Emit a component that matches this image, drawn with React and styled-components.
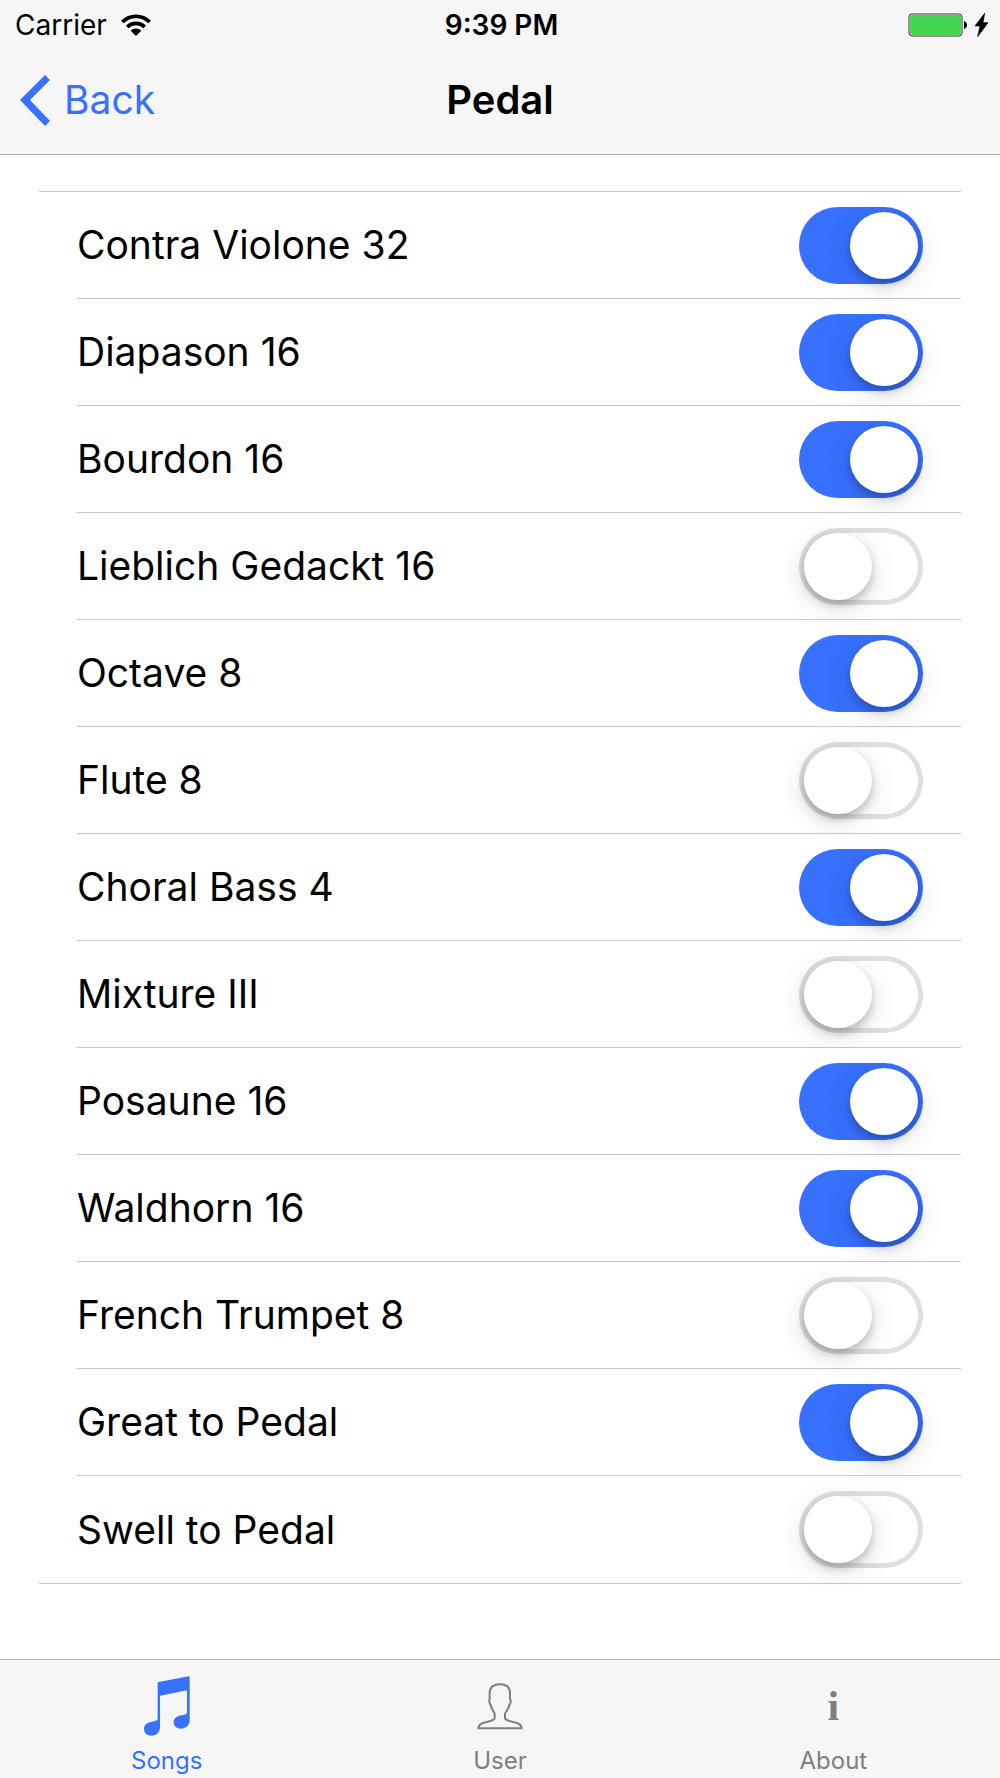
import React, { useState } from 'react';
import styled, { createGlobalStyle } from 'styled-components';

const GlobalStyle = createGlobalStyle`
  * {
    box-sizing: border-box;
  }
  body {
    margin: 0;
    background: #fff;
    color: #000;
    font-family: Inter, 'Liberation Sans', sans-serif;
  }
`;

const Screen = styled.div`
  display: flex;
  flex-direction: column;
  min-height: 100vh;
`;

const Header = styled.header`
  background: #f6f6f6;
  border-bottom: 1px solid #b2b2b2;
`;

const StatusBar = styled.div`
  display: grid;
  grid-template-columns: 1fr auto 1fr;
  align-items: center;
  height: 50px;
  padding: 0 12px 0 15px;
  font-size: 28px;
  line-height: 34px;
`;

const StatusGroup = styled.div`
  display: flex;
  align-items: center;
  justify-content: ${({ $end }) => ($end ? 'flex-end' : 'flex-start')};
  gap: ${({ $end }) => ($end ? '7px' : '14px')};
`;

const Clock = styled.time`
  font-weight: 600;
`;

const NavBar = styled.nav`
  display: grid;
  grid-template-columns: 1fr auto 1fr;
  align-items: center;
  height: 104px;
  padding: 0 20px 4px;
`;

const BackButton = styled.button`
  display: flex;
  align-items: center;
  justify-self: start;
  gap: 14px;
  padding: 0;
  border: 0;
  background: none;
  color: #3870ff;
  font: inherit;
  font-size: 39px;
  line-height: 48px;
  cursor: pointer;
`;

const Title = styled.h1`
  margin: 0;
  font-size: 40px;
  line-height: 48px;
  font-weight: 600;
`;

const Content = styled.main`
  flex: 1;
  padding: 36px 39px;
`;

const StopList = styled.ul`
  margin: 0;
  padding: 0 0 0 38px;
  list-style: none;
  border-top: 1px solid #c8c8c8;
  border-bottom: 1px solid #c8c8c8;
`;

const StopRow = styled.li`
  display: flex;
  align-items: center;
  justify-content: space-between;
  height: 107px;
  padding-right: 38px;

  &:not(:last-child) {
    border-bottom: 1px solid #c8c8c8;
  }
`;

const StopName = styled.label`
  font-size: 39px;
  line-height: 48px;
`;

const Toggle = styled.input`
  appearance: none;
  flex: none;
  width: 124px;
  height: 77px;
  margin: 0;
  padding: 5px;
  border-radius: 39px;
  background: #fff;
  box-shadow: inset 0 0 0 5px #dfdfdf;
  cursor: pointer;

  &::before {
    content: '';
    display: block;
    width: 68px;
    height: 67px;
    border-radius: 50%;
    background: #fff;
    box-shadow: 0 7px 28px rgba(0, 0, 0, 0.14), 0 5px 8px rgba(0, 0, 0, 0.2);
  }

  &:checked {
    background: #3870ff;
    box-shadow: none;
  }

  &:checked::before {
    margin-left: auto;
  }
`;

const TabBar = styled.nav`
  display: grid;
  grid-template-columns: repeat(3, 1fr);
  background: #f6f6f6;
  border-top: 1px solid #b2b2b2;
`;

const Tab = styled.a`
  display: flex;
  flex-direction: column;
  align-items: center;
  gap: 11px;
  padding: 16px 0 3px;
  color: ${({ $active }) => ($active ? '#3870ff' : '#7f7f7f')};
  font-size: 24px;
  line-height: 28px;
  text-decoration: none;
`;

const TabIcon = styled.span`
  display: flex;
  align-items: center;
  justify-content: center;
  height: 60px;
`;

const InfoGlyph = styled.span`
  font-family: 'Liberation Serif', serif;
  font-size: 42px;
  line-height: 48px;
  font-weight: 700;
`;

const WifiIcon = () => (
  <svg width="30" height="22" viewBox="0 0 90 66" aria-hidden="true">
    <g fill="none" stroke="#000" strokeWidth="11">
      <path d="M4 24A58 58 0 0 1 86 24" />
      <path d="M19 39A37 37 0 0 1 71 39" />
    </g>
    <path d="M29 50A23 23 0 0 1 61 50L45 66Z" />
  </svg>
);

const BatteryIcon = () => (
  <svg width="60" height="24" viewBox="0 0 60 24" aria-hidden="true">
    <rect x="1" y="1" width="53" height="22" rx="3" fill="#fff" stroke="#333" />
    <rect x="2" y="2" width="51" height="20" rx="2" fill="#44d553" />
    <path d="M56 8Q59 9 59 12T56 16Z" />
  </svg>
);

const BoltIcon = () => (
  <svg width="13" height="24" viewBox="0 0 39 72" aria-hidden="true">
    <path d="M29 1L0 39H15L8 71L39 29H24Z" stroke="#000" strokeWidth="2" />
  </svg>
);

const ChevronIcon = () => (
  <svg width="30" height="51" viewBox="0 0 30 51" fill="currentColor" aria-hidden="true">
    <path d="M25 0L30 5L10 25L30 46L25 51L0 25Z" />
  </svg>
);

const MusicIcon = () => (
  <svg width="46" height="60" viewBox="0 0 138 180" fill="currentColor" aria-hidden="true">
    <path d="M41 21Q41 18 44 18L134 1Q137 1 137 4V133C137 148 126 158 110 158C97 158 89 150 89 139C89 127 99 120 113 118C124 116 129 114 129 107V43L48 59V153C48 168 38 179 22 179C8 179 0 170 0 159C0 146 10 139 25 137C36 135 41 134 41 127Z" />
  </svg>
);

const UserIcon = () => (
  <svg width="46" height="47" viewBox="0 0 138 141" fill="none" stroke="currentColor" strokeWidth="6" aria-hidden="true">
    <path d="M69 4C48 4 38 14 38 31V49C35 50 37 62 41 66C43 78 49 82 53 92V106C49 120 5 112 4 136H134C133 112 89 120 84 106V92C89 82 95 78 97 66C101 62 103 50 99 49V31C99 14 90 4 69 4Z" />
  </svg>
);

const tabs = [
  { name: 'Songs', icon: <MusicIcon /> },
  { name: 'User', icon: <UserIcon /> },
  { name: 'About', icon: <InfoGlyph aria-hidden="true">i</InfoGlyph> },
];

const initialStops = [
  { name: 'Contra Violone 32', on: true },
  { name: 'Diapason 16', on: true },
  { name: 'Bourdon 16', on: true },
  { name: 'Lieblich Gedackt 16', on: false },
  { name: 'Octave 8', on: true },
  { name: 'Flute 8', on: false },
  { name: 'Choral Bass 4', on: true },
  { name: 'Mixture III', on: false },
  { name: 'Posaune 16', on: true },
  { name: 'Waldhorn 16', on: true },
  { name: 'French Trumpet 8', on: false },
  { name: 'Great to Pedal', on: true },
  { name: 'Swell to Pedal', on: false },
];

const App = () => {
  const [stops, setStops] = useState(initialStops);

  const toggleStop = (index) => {
    setStops(stops.map((stop, i) => (i === index ? { ...stop, on: !stop.on } : stop)));
  };

  return (
    <Screen>
      <GlobalStyle />
      <Header>
        <StatusBar>
          <StatusGroup>
            <span>Carrier</span>
            <WifiIcon />
          </StatusGroup>
          <Clock>9:39 PM</Clock>
          <StatusGroup $end>
            <BatteryIcon />
            <BoltIcon />
          </StatusGroup>
        </StatusBar>
        <NavBar>
          <BackButton type="button">
            <ChevronIcon />
            <span>Back</span>
          </BackButton>
          <Title>Pedal</Title>
        </NavBar>
      </Header>

      <Content>
        <StopList>
          {stops.map((stop, index) => (
            <StopRow key={stop.name}>
              <StopName htmlFor={`stop-${index}`}>{stop.name}</StopName>
              <Toggle
                type="checkbox"
                role="switch"
                id={`stop-${index}`}
                checked={stop.on}
                onChange={() => toggleStop(index)}
              />
            </StopRow>
          ))}
        </StopList>
      </Content>

      <TabBar>
        {tabs.map((tab, index) => (
          <Tab key={tab.name} href={`#${tab.name.toLowerCase()}`} $active={index === 0}>
            <TabIcon>{tab.icon}</TabIcon>
            <span>{tab.name}</span>
          </Tab>
        ))}
      </TabBar>
    </Screen>
  );
};

export default App;
